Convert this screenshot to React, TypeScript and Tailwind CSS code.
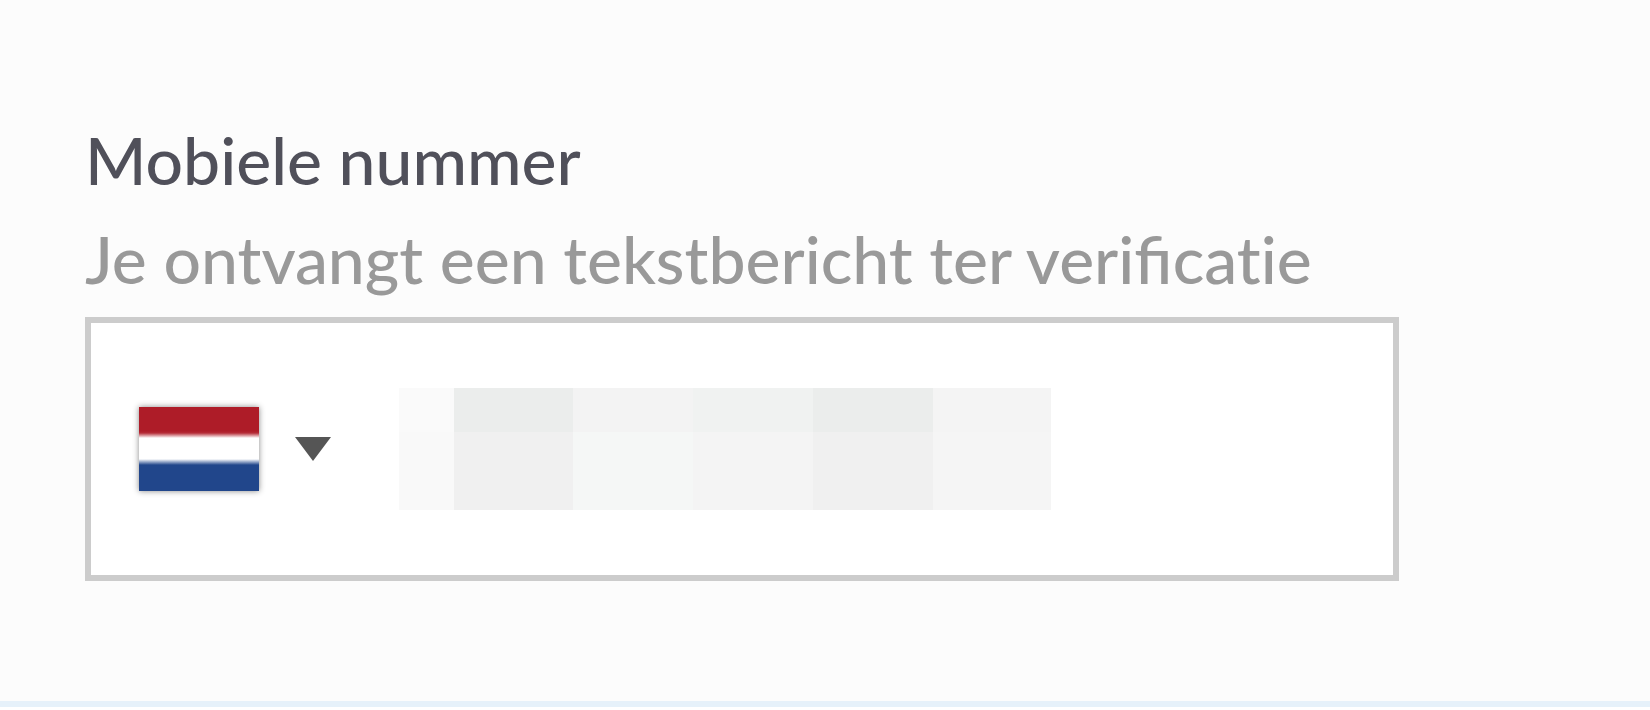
import React, { useState } from 'react';

interface MaskTile {
  x: number;
  y: number;
  width: number;
  height: number;
  fill: string;
}

const maskTiles: MaskTile[] = [
  { x: 0, y: 0, width: 55, height: 44, fill: '#fafafa' },
  { x: 55, y: 0, width: 119, height: 44, fill: '#ebedec' },
  { x: 174, y: 0, width: 120, height: 44, fill: '#f3f3f3' },
  { x: 294, y: 0, width: 120, height: 44, fill: '#f0f2f1' },
  { x: 414, y: 0, width: 120, height: 44, fill: '#ebedec' },
  { x: 534, y: 0, width: 118, height: 44, fill: '#f4f4f4' },
  { x: 0, y: 44, width: 55, height: 78, fill: '#f9f9f9' },
  { x: 55, y: 44, width: 119, height: 78, fill: '#f0f0f0' },
  { x: 174, y: 44, width: 120, height: 78, fill: '#f5f7f6' },
  { x: 294, y: 44, width: 120, height: 78, fill: '#f4f4f4' },
  { x: 414, y: 44, width: 120, height: 78, fill: '#f0f0f0' },
  { x: 534, y: 44, width: 118, height: 78, fill: '#f5f5f5' },
];

// The stripes fade into each other over a few pixels
const DutchFlag: React.FC = () => (
  <span className="block h-[84px] w-[120px] bg-[linear-gradient(to_bottom,#ae1c28_0_24px,#b52d38_26px,#ffffff_31px_52px,#21468b_58px)] shadow-[0_0_6px_0_#888888]" />
);

const NumberMask: React.FC = () => (
  <svg
    width="652"
    height="122"
    viewBox="0 0 652 122"
    shapeRendering="crispEdges"
    aria-hidden="true"
    className="pointer-events-none absolute top-1/2 left-0 -translate-y-1/2"
  >
    {maskTiles.map((tile) => (
      <rect key={`${tile.x}-${tile.y}`} {...tile} />
    ))}
  </svg>
);

const App: React.FC = () => {
  const [phone, setPhone] = useState('');

  return (
    <div className="min-h-screen bg-white font-['Lato',sans-serif]">
      <section className="border-b-6 border-[#e6f1fa] bg-[#fcfcfc] pt-[110px] pb-30 pl-[85px] pr-[85px]">
        <div className="max-w-[1314px]">
          <label htmlFor="phone" className="block text-[66px] leading-[99px] font-medium text-[#50505a]">
            Mobiele nummer
          </label>
          <p id="phone-hint" className="text-[66px] leading-[99px] font-medium text-[#999999]">
            {/* keep the fi ligature, drop the ti one */}
            Je ontvangt een tekstbericht ter verifi<span className="[font-variant-ligatures:none]">catie</span>
          </p>

          <div className="mt-[9px] flex h-66 items-center border-6 border-[#cccccc] bg-white pl-12">
            <button type="button" aria-label="Nederland" className="flex shrink-0 items-center gap-9">
              <DutchFlag />
              <svg width="36" height="24" viewBox="0 0 36 24" aria-hidden="true">
                <path d="M0 0H36L18 24Z" fill="#555555" />
              </svg>
            </button>
            <div className="relative ml-17 h-full min-w-0 flex-1">
              <input
                id="phone"
                type="tel"
                value={phone}
                onChange={(e) => setPhone(e.target.value)}
                aria-describedby="phone-hint"
                className="h-full w-full text-[66px] text-[#50505a] outline-none"
              />
              <NumberMask />
            </div>
          </div>
        </div>
      </section>
    </div>
  );
};

export default App;
